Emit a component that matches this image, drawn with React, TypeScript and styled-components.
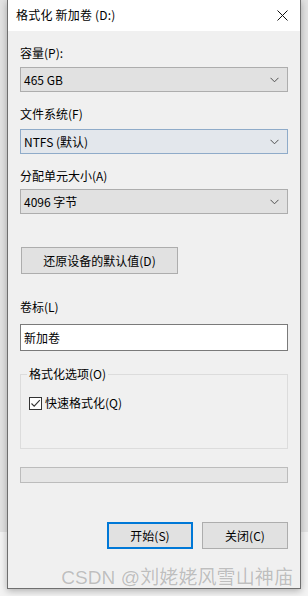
import React from "react";
import styled, { createGlobalStyle } from "styled-components";

const Global = createGlobalStyle`
  html, body { margin: 0; padding: 0; }
  body {
    background: #f0f0f0;
    font-family: "Noto Sans CJK SC", "Liberation Sans", sans-serif;
    font-size: 12px;
    color: #000;
  }
  * { box-sizing: border-box; }
`;

const Page = styled.div`
  position: relative;
  width: 308px;
  height: 596px;
  overflow: hidden;
  background: linear-gradient(to bottom, #e2e2e2 0, #e2e2e2 532px, #f3f3f3 532px);
  display: flex;
  align-items: flex-start;
`;

const Window = styled.div`
  margin-left: 7px;
  width: 294px;
  height: 589px;
  border: 1px solid #6f6f6f;
  border-top: none;
  background: #f0f0f0;
  box-shadow: 0 2px 7px rgba(0, 0, 0, 0.28);
  display: flex;
  flex-direction: column;
`;

const TitleBar = styled.div`
  height: 31px;
  background: #ffffff;
  display: flex;
  align-items: center;
  justify-content: space-between;
  padding: 0 10px 0 8px;
  flex-shrink: 0;
`;

const Title = styled.span`
  font-size: 12px;
  line-height: 16px;
  color: #000;
  margin-top: -1px;
  letter-spacing: 0.2px;
`;

const Close = styled.div`
  width: 16px;
  height: 16px;
  display: flex;
  align-items: center;
  justify-content: center;
  margin-top: -1px;
`;

const Body = styled.div`
  flex: 1;
  display: flex;
  flex-direction: column;
  padding: 0 12px;
`;

const Label = styled.div<{ $top: number }>`
  margin-top: ${(p) => p.$top}px;
  font-size: 12px;
  line-height: 16px;
  height: 16px;
  white-space: nowrap;
`;

const Select = styled.div<{ $top: number; $hover?: boolean }>`
  margin-top: ${(p) => p.$top}px;
  height: 25px;
  width: 100%;
  border: 1px solid ${(p) => (p.$hover ? "#8fabc9" : "#adadad")};
  background: ${(p) => (p.$hover ? "#e3e7ec" : "#e1e1e1")};
  display: flex;
  align-items: center;
  justify-content: space-between;
  padding: 0 8px 0 3px;
  font-size: 12px;
  line-height: 16px;
`;

const Chevron = () => (
  <svg width="9" height="6" viewBox="0 0 9 6">
    <path d="M0.5 0.8 L4.5 4.8 L8.5 0.8" fill="none" stroke="#505050" strokeWidth="1" />
  </svg>
);

const Button = styled.div<{ $top?: number; $width: number; $primary?: boolean }>`
  margin-top: ${(p) => p.$top ?? 0}px;
  width: ${(p) => p.$width}px;
  height: 27px;
  border: ${(p) => (p.$primary ? "2px solid #0078d7" : "1px solid #adadad")};
  background: #e1e1e1;
  display: flex;
  align-items: center;
  justify-content: center;
  font-size: 12px;
  line-height: 16px;
  flex-shrink: 0;
`;

const Input = styled.div`
  margin-top: 9px;
  height: 27px;
  width: 100%;
  background: #ffffff;
  border: 1px solid #7a7a7a;
  display: flex;
  align-items: center;
  padding-left: 3px;
  font-size: 12px;
  line-height: 16px;
`;

const Group = styled.fieldset`
  margin: 15px 0 0 0;
  height: 83px;
  border: 1px solid #dcdcdc;
  padding: 13px 8px 0 8px;
  min-width: 0;
`;

const Legend = styled.legend`
  padding: 0 2px;
  margin-left: -2px;
  font-size: 12px;
  line-height: 16px;
`;

const CheckRow = styled.div`
  display: flex;
  align-items: center;
  gap: 3px;
  height: 16px;
  font-size: 12px;
  line-height: 16px;
`;

const Box = styled.div`
  width: 13px;
  height: 13px;
  border: 1px solid #333333;
  background: #ffffff;
  display: flex;
  align-items: center;
  justify-content: center;
`;

const Progress = styled.div`
  margin-top: 18px;
  height: 16px;
  width: 100%;
  border: 1px solid #bcbcbc;
  background: #e6e6e6;
`;

const Actions = styled.div`
  margin-top: 39px;
  display: flex;
  justify-content: flex-end;
  gap: 9px;
`;

const Watermark = styled.div`
  position: absolute;
  right: 15px;
  bottom: 7px;
  font-family: "Liberation Sans", "Noto Sans CJK SC", sans-serif;
  font-size: 19px;
  line-height: 22px;
  color: rgba(150, 150, 150, 0.6);
  letter-spacing: 0.1px;
  white-space: nowrap;
  text-shadow: 0 0 1px rgba(255, 255, 255, 0.8);
`;

export default function App() {
  return (
    <>
      <Global />
      <Page>
        <Window>
          <TitleBar>
            <Title>格式化 新加卷 (D:)</Title>
            <Close>
              <svg width="11" height="11" viewBox="0 0 11 11">
                <path d="M0.5 0.5 L10.5 10.5 M10.5 0.5 L0.5 10.5" stroke="#111" strokeWidth="1" />
              </svg>
            </Close>
          </TitleBar>
          <Body>
            <Label $top={14}>容量(P):</Label>
            <Select $top={6}>
              <span>465 GB</span>
              <Chevron />
            </Select>
            <Label $top={14}>文件系统(F)</Label>
            <Select $top={7} $hover>
              <span>NTFS (默认)</span>
              <Chevron />
            </Select>
            <Label $top={14}>分配单元大小(A)</Label>
            <Select $top={5}>
              <span>4096 字节</span>
              <Chevron />
            </Select>
            <Button $top={33} $width={157} style={{ marginLeft: 1 }}>
              还原设备的默认值(D)
            </Button>
            <Label $top={25}>卷标(L)</Label>
            <Input>新加卷</Input>
            <Group>
              <Legend>格式化选项(O)</Legend>
              <CheckRow>
                <Box>
                  <svg width="11" height="11" viewBox="0 0 11 11">
                    <path d="M1.5 5.5 L4.2 8.2 L9.8 2.2" fill="none" stroke="#333" strokeWidth="1.1" />
                  </svg>
                </Box>
                <span>快速格式化(Q)</span>
              </CheckRow>
            </Group>
            <Progress />
            <Actions>
              <Button $width={86} $primary>开始(S)</Button>
              <Button $width={86}>关闭(C)</Button>
            </Actions>
          </Body>
        </Window>
        <Watermark>CSDN @刘姥姥风雪山神庙</Watermark>
      </Page>
    </>
  );
}
